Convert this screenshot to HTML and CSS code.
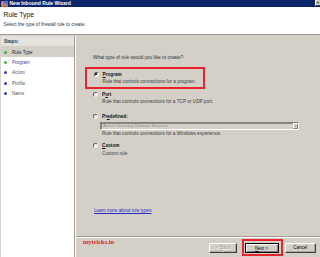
FILE: index.html
```html
<!DOCTYPE html>
<html lang="en">
<head>
    <meta charset="UTF-8">
    <title>New Inbound Rule Wizard</title>
    <link rel="stylesheet" href="styles.css">
</head>
<body>
    <div class="window">
        <div class="titlebar">
            <svg class="app-icon" viewBox="0 0 7 7">
                <rect x="0" y="1" width="7" height="6" fill="#b8402c"/>
                <path d="M0 3h7M0 5h7M2 1v2M5 1v2M1 3v2M4 3v2M2 5v2M5 5v2" stroke="#f0e0c8" stroke-width="0.5"/>
                <circle cx="5" cy="2.5" r="2" fill="#3a7ad8"/>
            </svg>
            <span class="title">New Inbound Rule Wizard</span>
            <span class="close">
                <svg viewBox="0 0 5 6"><path d="M1.2 1.8l2.4 2.4M3.6 1.8l-2.4 2.4" stroke="#000" stroke-width="0.8"/></svg>
            </span>
        </div>

        <div class="header">
            <div class="header-title">Rule Type</div>
            <div class="header-sub">Select the type of firewall rule to create.</div>
        </div>

        <div class="body">
            <div class="steps">
                <div class="steps-head">Steps:</div>
                <ul class="step-list">
                    <li class="step current"><span class="bullet done"></span>Rule Type</li>
                    <li class="step link"><span class="bullet done"></span>Program</li>
                    <li class="step"><span class="bullet"></span>Action</li>
                    <li class="step"><span class="bullet"></span>Profile</li>
                    <li class="step"><span class="bullet"></span>Name</li>
                </ul>
            </div>

            <div class="main">
                <div class="content">
                    <p class="question">What type of rule would you like to create?</p>

                    <div class="option marked">
                        <div class="opt-row"><span class="radio on"></span><span class="opt-label"><u>P</u>rogram</span></div>
                        <div class="opt-desc">Rule that controls connections for a program.</div>
                    </div>

                    <div class="option port">
                        <div class="opt-row"><span class="radio"></span><span class="opt-label">P<u>o</u>rt</span></div>
                        <div class="opt-desc">Rule that controls connections for a TCP or UDP port.</div>
                    </div>

                    <div class="option predefined">
                        <div class="opt-row"><span class="radio"></span><span class="opt-label">Pr<u>e</u>defined:</span></div>
                        <div class="select">
                            <span class="select-text">Active Directory Domain Services</span>
                            <span class="select-arrow">
                                <svg viewBox="0 0 5 6"><path d="M1 2.2h3l-1.5 1.6z" fill="#808080"/></svg>
                            </span>
                        </div>
                        <div class="opt-desc">Rule that controls connections for a Windows experience.</div>
                    </div>

                    <div class="option custom">
                        <div class="opt-row"><span class="radio"></span><span class="opt-label"><u>C</u>ustom</span></div>
                        <div class="opt-desc">Custom rule.</div>
                    </div>

                    <a class="learn" href="#">Learn more about rule types</a>
                </div>

                <div class="footer">
                    <span class="brand">mytricks.in</span>
                    <div class="buttons">
                        <button class="btn back" disabled>&lt; <u>B</u>ack</button>
                        <div class="next-mark">
                            <button class="btn next"><u>N</u>ext &gt;</button>
                        </div>
                        <button class="btn cancel">Cancel</button>
                    </div>
                </div>
            </div>
        </div>
    </div>
</body>
</html>
```

FILE: styles.css
```css
* {
    box-sizing: border-box;
}

body {
    margin: 0;
    width: 320px;
    height: 257px;
    overflow: hidden;
    font-family: "Liberation Sans", Arial, sans-serif;
    background-color: #d4d0c8;
    color: #000;
}

.window {
    display: flex;
    flex-direction: column;
    height: 257px;
}

/* title bar */
.titlebar {
    height: 7px;
    flex: none;
    display: flex;
    align-items: center;
    background-color: #0a246a;
    color: #fff;
}

.app-icon {
    width: 7px;
    height: 7px;
    margin-left: 1px;
}

.title {
    font-size: 5px;
    font-weight: bold;
    line-height: 7px;
    margin-left: 1.5px;
}

.close {
    margin-left: auto;
    align-self: flex-start;
    width: 5px;
    height: 6px;
    background-color: #d4d0c8;
    border-left: 0.5px solid #fff;
    border-bottom: 0.5px solid #404040;
    display: flex;
}

.close svg {
    width: 100%;
    height: 100%;
}

/* header */
.header {
    height: 28px;
    flex: none;
    background-color: #fff;
    border-bottom: 1px solid #a09c94;
    padding: 4px 0 0 3.5px;
}

.header-title {
    font-size: 6.8px;
    line-height: 8px;
    color: #111;
}

.header-sub {
    font-size: 4.7px;
    line-height: 6px;
    margin-top: 3px;
    color: #333;
}

/* body */
.body {
    flex: 1;
    display: flex;
    min-height: 0;
}

.steps {
    width: 75px;
    flex: none;
    margin-top: 1px;
    background-color: #fff;
    border-left: 1px solid #d8d6d0;
    border-right: 1px solid #a09c94;
    box-shadow: 1px 0 0 #fff;
}

.steps-head {
    height: 11px;
    line-height: 11px;
    padding-left: 3px;
    font-size: 4.8px;
    font-weight: bold;
    color: #333;
    background-color: #e4e2dc;
    border-bottom: 0.5px solid #d4d0c8;
}

.step-list {
    list-style: none;
    margin: 0;
    padding: 0;
}

.step {
    height: 10.4px;
    display: flex;
    align-items: center;
    font-size: 4.6px;
    color: #555;
    padding-left: 3px;
}

.step.current {
    background-color: #d4d0c8;
    color: #222;
}

.step.link {
    color: #3a3a9c;
}

.bullet {
    width: 3px;
    height: 3px;
    border-radius: 50%;
    background-color: #3b3bc4;
    margin-right: 5px;
}

.bullet.done {
    background-color: #3fb53f;
}

/* main pane */
.main {
    flex: 1;
    display: flex;
    flex-direction: column;
    margin-left: 1px;
}

.content {
    flex: 1;
    padding: 18.5px 0 0 17px;
}

.question {
    margin: 0;
    font-size: 4.8px;
    line-height: 7px;
    color: #333;
}

.option {
    width: 210px;
}

.option.marked {
    width: 120px;
    margin: 6.5px 0 0 -8px;
    padding: 1px 0 1px 6.5px;
    border: 2px solid #e8232b;
}

.option.port {
    margin-top: 1px;
}

.option.predefined {
    margin-top: 6.7px;
}

.option.custom {
    margin-top: 4px;
}

.opt-row {
    display: flex;
    align-items: center;
    height: 8px;
}

.radio {
    position: relative;
    flex: none;
    width: 5px;
    height: 5px;
    border-radius: 50%;
    background-color: #fff;
    border: 0.8px solid;
    border-color: #606060 #e8e8e8 #e8e8e8 #606060;
    margin-right: 4px;
}

.radio.on::after {
    content: "";
    position: absolute;
    left: 0.9px;
    top: 0.9px;
    width: 1.6px;
    height: 1.6px;
    border-radius: 50%;
    background-color: #000;
}

.opt-label {
    font-size: 4.7px;
    font-weight: bold;
    color: #111;
}

.opt-desc {
    font-size: 4.7px;
    line-height: 8px;
    padding-left: 9px;
    color: #3a3a3a;
}

.option.custom .opt-desc {
    line-height: 7px;
}

.select {
    display: flex;
    align-items: center;
    width: 199px;
    height: 8px;
    margin: 1px 0 0 7px;
    border: 1px solid;
    border-color: #808080 #fff #fff #808080;
    box-shadow: inset 0.5px 0.5px 0 #404040;
}

.select-text {
    flex: 1;
    font-size: 4.4px;
    color: #8a8a8a;
    padding-left: 2px;
}

.select-arrow {
    width: 5px;
    height: 6px;
    margin-right: 0.5px;
    display: flex;
    border: 0.5px solid;
    border-color: #fff #808080 #808080 #fff;
}

.select-arrow svg {
    width: 100%;
    height: 100%;
}

.learn {
    display: inline-block;
    margin: 50px 0 0 1px;
    font-size: 4.6px;
    line-height: 8px;
    color: #2a2acc;
}

/* footer */
.footer {
    height: 20px;
    flex: none;
    display: flex;
    align-items: flex-start;
    padding: 0 4px 0 7px;
    border-top: 1px solid #fff;
    box-shadow: 0 -1px 0 #a09c94;
}

.brand {
    font-family: "Liberation Serif", "Times New Roman", serif;
    font-size: 6.4px;
    font-weight: bold;
    line-height: 7px;
    color: #e0202a;
}

.buttons {
    margin-left: auto;
    margin-top: 0.7px;
    display: flex;
    align-items: flex-start;
}

.btn {
    display: block;
    height: 10px;
    padding: 0;
    font-family: "Liberation Sans", Arial, sans-serif;
    font-size: 4.5px;
    color: #000;
    background-color: #d4d0c8;
    border: 1px solid;
    border-color: #fff #404040 #404040 #fff;
    box-shadow: inset -0.5px -0.5px 0 #808080;
}

.btn.back {
    width: 28px;
    margin-top: 4px;
    color: #a09c94;
    text-shadow: 0.5px 0.5px 0 #fff;
}

.next-mark {
    display: flex;
    margin: 0 1.4px 0 4.7px;
    padding: 2.5px 2.8px 1.1px 0.8px;
    border: 2px solid #e8232b;
}

.btn.next {
    width: 34px;
    border-color: #000;
    box-shadow: inset 1px 1px 0 #fff, inset -1px -1px 0 #808080;
}

.btn.cancel {
    width: 31.3px;
    margin-top: 4px;
}
```
